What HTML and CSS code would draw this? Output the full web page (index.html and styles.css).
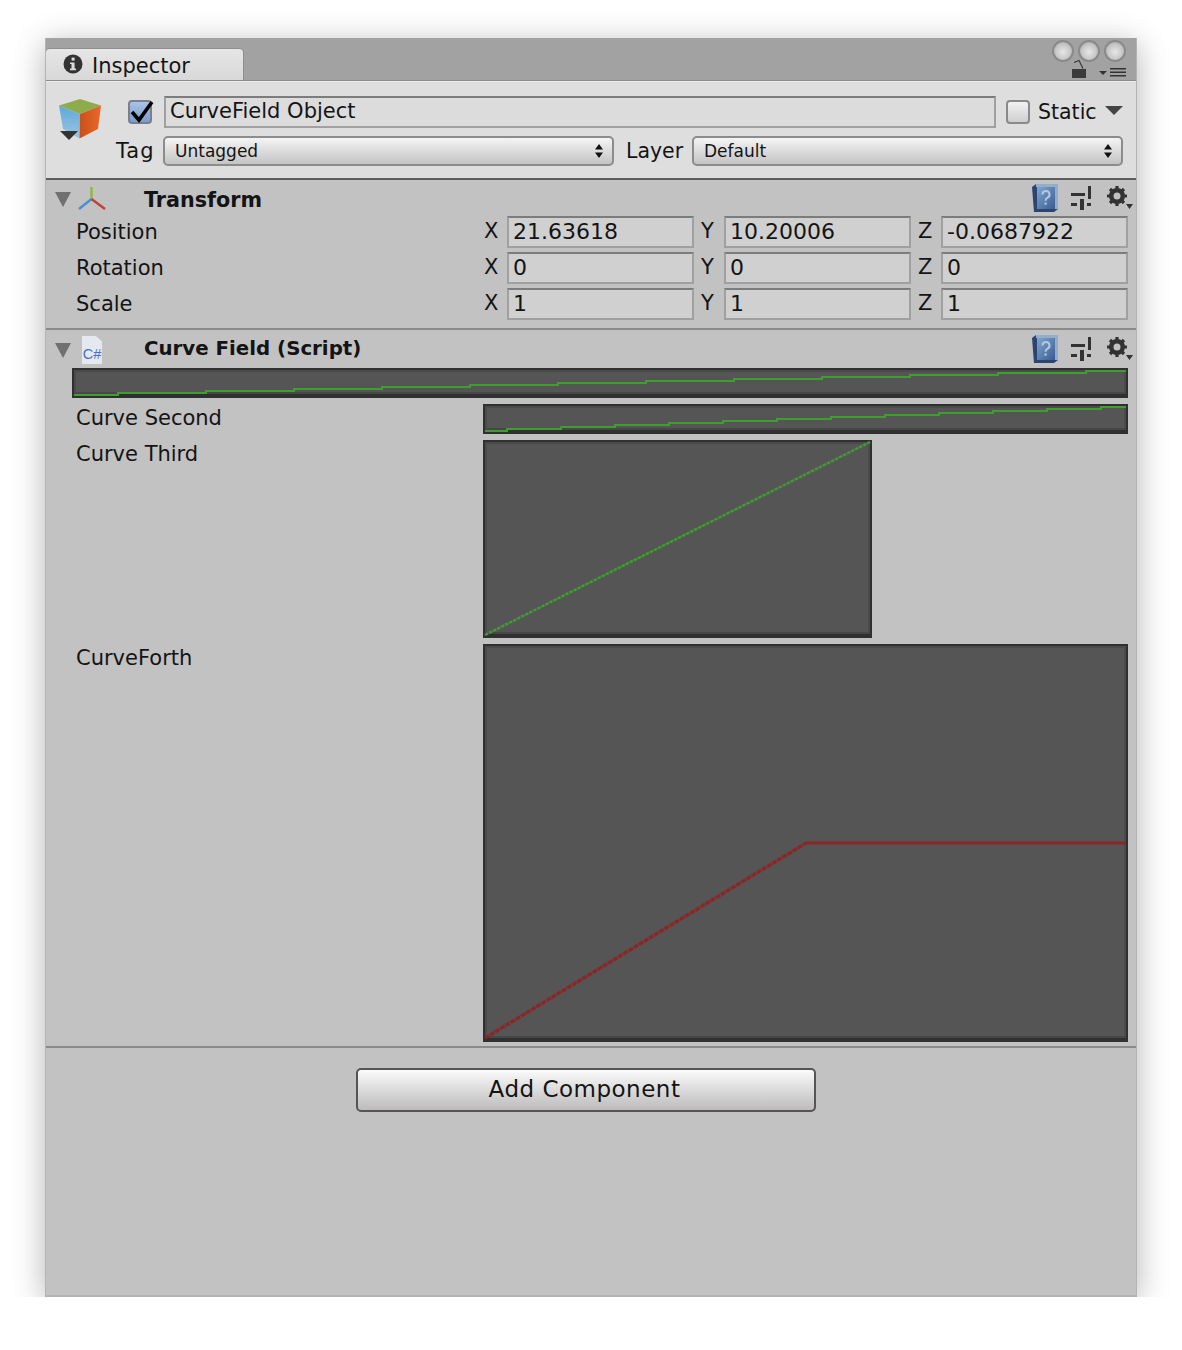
FILE: index.html
```html
<!DOCTYPE html>
<html lang="en">
<head>
    <meta charset="UTF-8">
    <title>Inspector</title>
    <link rel="stylesheet" href="styles.css">
</head>
<body>
<div class="window">
    <div class="tabbar">
        <div class="tab">
            <svg class="tab-icon" viewBox="0 0 20 20">
                <circle cx="10" cy="10" r="9.5" fill="#333"/>
                <rect x="8.6" y="3.6" width="3" height="3" fill="#ddd"/>
                <path d="M7 8.4h4.6v6.2h1.4v1.6H7v-1.6h1.5V10H7z" fill="#ddd"/>
            </svg>
            <span class="tab-title">Inspector</span>
        </div>
        <svg class="tab-tools" width="84" height="42" viewBox="0 0 84 42">
            <defs>
                <radialGradient id="bulb" cx="50%" cy="55%" r="60%">
                    <stop offset="0" stop-color="#e6e6e6"/>
                    <stop offset="0.6" stop-color="#c8c8c8"/>
                    <stop offset="1" stop-color="#a6a6a6"/>
                </radialGradient>
            </defs>
            <circle cx="13" cy="13" r="10" fill="url(#bulb)" stroke="#8a8a8a" stroke-width="2"/>
            <circle cx="39" cy="13" r="10" fill="url(#bulb)" stroke="#8a8a8a" stroke-width="2"/>
            <circle cx="65" cy="13" r="10" fill="url(#bulb)" stroke="#8a8a8a" stroke-width="2"/>
            <rect x="22" y="31" width="14" height="9" fill="#3a3a3a"/>
            <path d="M24 24.500l5-2 4 8" fill="none" stroke="#3a3a3a" stroke-width="1.200"/>
            <path d="M49 33h8l-4 4z" fill="#333"/>
            <path d="M60 30h16v1.600H60zM60 33.500h16v1.600H60zM60 37h16v1.600H60z" fill="#333"/>
        </svg>
    </div>

    <div class="object-head">
        <svg class="cube" width="48" height="46" viewBox="0 0 48 46">
            <defs>
                <linearGradient id="cubeLeft" x1="0" y1="0" x2="0" y2="1"><stop offset="0" stop-color="#5fa8da"/><stop offset="1" stop-color="#9cc6e0"/></linearGradient>
                <linearGradient id="cubeRight" x1="0" y1="0" x2="1" y2="0"><stop offset="0" stop-color="#c9501b"/><stop offset="1" stop-color="#e8692a"/></linearGradient>
            </defs>
            <path d="M24 2 45 8.500 24 17 3 8.500z" fill="#8fac4c"/>
            <path d="M3 8.500 24 17 23.500 41.500 7 32z" fill="url(#cubeLeft)"/>
            <path d="M24 17 45 8.500 42 32 23.500 41.500z" fill="url(#cubeRight)"/>
            <path d="M4 34h18l-9 9z" fill="#333"/>
        </svg>
        <div class="object-rows">
            <div class="name-row">
                <span class="check check-on">
                    <svg class="tick" width="20" height="20" viewBox="0 0 20 20"><path d="M2 10 9 18 22 0" fill="none" stroke="#000" stroke-width="3.600"/></svg>
                </span>
                <div class="field name-field">CurveField Object</div>
                <span class="check static-check"></span>
                <span class="static-label">Static</span>
                <span class="static-arrow"></span>
            </div>
            <div class="tag-row">
                <span class="tag-label">Tag</span>
                <div class="popup tag-popup">Untagged<svg class="updown" width="8" height="14" viewBox="0 0 8 14"><path d="M4 0 8 5.500H0zM4 14 0 8.500H8z" fill="#111"/></svg></div>
                <span class="layer-label">Layer</span>
                <div class="popup layer-popup">Default<svg class="updown" width="8" height="14" viewBox="0 0 8 14"><path d="M4 0 8 5.500H0zM4 14 0 8.500H8z" fill="#111"/></svg></div>
            </div>
        </div>
    </div>

    <section class="component transform">
        <div class="comp-head">
            <span class="foldout"></span>
            <svg class="comp-icon" width="28" height="24" viewBox="0 0 28 24">
                <path d="M13.500 13V1" stroke="#8fb83a" stroke-width="2.400" fill="none"/>
                <path d="M13.500 13 1 23" stroke="#4a8fd0" stroke-width="2.400" fill="none"/>
                <path d="M13.500 13 27 23" stroke="#c0403a" stroke-width="2.400" fill="none"/>
            </svg>
            <h2>Transform</h2>
            <div class="comp-tools">
                <svg class="help" width="26" height="28" viewBox="0 0 26 28">
                    <defs><linearGradient id="book" x1="0" y1="0" x2="1" y2="1"><stop offset="0" stop-color="#7fa6d0"/><stop offset="1" stop-color="#3a5c90"/></linearGradient></defs>
                    <path d="M0 3 4 0H26V25L22 28H2z" fill="#2c4570"/>
                    <path d="M4 0H26V25H23V3H4z" fill="#93aecb"/>
                    <rect x="5" y="3" width="18" height="22" fill="url(#book)"/>
                    <path d="M10.500 10.500a3.500 3.500 0 1 1 5 3.200c-1.500.8-2 1.300-2 3" fill="none" stroke="#b4c8e0" stroke-width="2"/>
                    <rect x="12.500" y="18.500" width="2.200" height="2.200" fill="#b4c8e0"/>
                </svg>
                <svg class="sliders" width="21" height="24" viewBox="0 0 21 24">
                    <path d="M0 7h14v3H0zM17 0h3v13h-3zM0 17h6v3H0zM9 13h4v11H9zM16 17h4v3h-4z" fill="#333"/>
                </svg>
                <svg class="gear" width="27" height="24" viewBox="0 0 27 24">
                    <circle cx="11" cy="10" r="6" fill="none" stroke="#333" stroke-width="4"/>
                    <path d="M11 0v20M1 10h20M4 3l14 14M18 3 4 17" stroke="#333" stroke-width="3.200"/>
                    <circle cx="11" cy="10" r="3.500" fill="#c2c2c2"/>
                    <path d="M20 18h7l-3.500 5z" fill="#333"/>
                </svg>
            </div>
        </div>
        <div class="vec-row">
            <span class="prop-label">Position</span>
            <div class="vec">
                <div class="axis"><span>X</span><div class="field">21.63618</div></div>
                <div class="axis"><span>Y</span><div class="field">10.20006</div></div>
                <div class="axis"><span>Z</span><div class="field">-0.0687922</div></div>
            </div>
        </div>
        <div class="vec-row">
            <span class="prop-label">Rotation</span>
            <div class="vec">
                <div class="axis"><span>X</span><div class="field">0</div></div>
                <div class="axis"><span>Y</span><div class="field">0</div></div>
                <div class="axis"><span>Z</span><div class="field">0</div></div>
            </div>
        </div>
        <div class="vec-row">
            <span class="prop-label">Scale</span>
            <div class="vec">
                <div class="axis"><span>X</span><div class="field">1</div></div>
                <div class="axis"><span>Y</span><div class="field">1</div></div>
                <div class="axis"><span>Z</span><div class="field">1</div></div>
            </div>
        </div>
    </section>

    <section class="component script">
        <div class="comp-head">
            <span class="foldout"></span>
            <div class="cs-icon">C#</div>
            <h2>Curve Field (Script)</h2>
            <div class="comp-tools">
                <svg class="help" width="26" height="28" viewBox="0 0 26 28">
                    <path d="M0 3 4 0H26V25L22 28H2z" fill="#2c4570"/>
                    <path d="M4 0H26V25H23V3H4z" fill="#93aecb"/>
                    <rect x="5" y="3" width="18" height="22" fill="url(#book)"/>
                    <path d="M10.500 10.500a3.500 3.500 0 1 1 5 3.200c-1.500.8-2 1.300-2 3" fill="none" stroke="#b4c8e0" stroke-width="2"/>
                    <rect x="12.500" y="18.500" width="2.200" height="2.200" fill="#b4c8e0"/>
                </svg>
                <svg class="sliders" width="21" height="24" viewBox="0 0 21 24">
                    <path d="M0 7h14v3H0zM17 0h3v13h-3zM0 17h6v3H0zM9 13h4v11H9zM16 17h4v3h-4z" fill="#333"/>
                </svg>
                <svg class="gear" width="27" height="24" viewBox="0 0 27 24">
                    <circle cx="11" cy="10" r="6" fill="none" stroke="#333" stroke-width="4"/>
                    <path d="M11 0v20M1 10h20M4 3l14 14M18 3 4 17" stroke="#333" stroke-width="3.200"/>
                    <circle cx="11" cy="10" r="3.500" fill="#c2c2c2"/>
                    <path d="M20 18h7l-3.500 5z" fill="#333"/>
                </svg>
            </div>
        </div>

        <svg class="curve curve-first" width="1056" height="30" viewBox="2 2 1052 24">
            <polyline class="line-green" points="2,27 46,27 46,25 134,25 134,23 222,23 222,21 310,21 310,19 398,19 398,17 486,17 486,15 574,15 574,13 662,13 662,11 750,11 750,9 838,9 838,7 926,7 926,5 1014,5 1014,3 1054,3"/>
        </svg>

        <div class="curve-row">
            <span class="prop-label">Curve Second</span>
            <svg class="curve" width="645" height="30" viewBox="2 2 641 24">
                <polyline class="line-green" points="2,27 24,27 24,25 78,25 78,23 132,23 132,21 186,21 186,19 240,19 240,17 294,17 294,15 348,15 348,13 402,13 402,11 456,11 456,9 510,9 510,7 564,7 564,5 618,5 618,3 643,3"/>
            </svg>
        </div>
        <div class="curve-row">
            <span class="prop-label">Curve Third</span>
            <svg class="curve" width="389" height="198" viewBox="2 2 385 192">
                <line class="line-dotted" x1="2" y1="195" x2="387" y2="2"/>
            </svg>
        </div>
        <div class="curve-row">
            <span class="prop-label">CurveForth</span>
            <svg class="curve" width="645" height="398" viewBox="2 2 641 392">
                <line class="line-red line-red-slope" x1="2" y1="394" x2="323" y2="199"/>
                <line class="line-red" x1="322" y1="199" x2="643" y2="199"/>
            </svg>
        </div>
    </section>

    <div class="add-wrap">
        <button class="add-btn">Add Component</button>
    </div>
</div>
</body>
</html>
```

FILE: styles.css
```css
body {
    margin: 0;
    padding: 38px 45px 0;
    background: #fff;
    font-family: "DejaVu Sans", "Liberation Sans", sans-serif;
    font-size: 21px;
    color: #141414;
}
.window {
    width: 1092px;
    height: 1259px;
    background: #c2c2c2;
    box-shadow: 0 6px 30px rgba(0, 0, 0, 0.3);
    box-sizing: border-box;
    border: 1px solid #b4b4b4;
    border-top: none;
    border-bottom: 2px solid #b4b4b4;
}

/* tab strip */
.tabbar {
    height: 43px;
    background: #a2a2a2;
    border-bottom: 1px solid #8a8a8a;
    box-sizing: border-box;
    display: flex;
    align-items: flex-end;
    justify-content: space-between;
}
.tab {
    width: 197px;
    height: 31px;
    background: linear-gradient(#e6e6e6, #d8d8d8);
    border-top-right-radius: 4px;
    border-top-left-radius: 4px;
    box-shadow: 1px 0 0 #8f8f8f, 0 -1px 0 #8f8f8f;
    display: flex;
    align-items: center;
    padding-left: 17px;
    box-sizing: border-box;
    gap: 9px;
}
.tab-icon {
    width: 20px;
    height: 20px;
    margin-top: -2px;
}
.tab-title {
    margin-top: 2px;
}
.tab-tools {
    margin-right: 2px;
    display: block;
}

/* object header */
.object-head {
    height: 99px;
    background: #dedede;
    border-top: 1px solid #ececec;
    border-bottom: 2px solid #5c5c5c;
    box-sizing: border-box;
    display: flex;
    padding: 14px 13px 0 10px;
}
.cube {
    margin-top: 1px;
    margin-right: 12px;
    flex-shrink: 0;
}
.object-rows {
    flex: 1;
    display: flex;
    flex-direction: column;
    gap: 8px;
}
.name-row {
    height: 32px;
    display: flex;
    align-items: center;
    padding-left: 12px;
}
.check {
    width: 24px;
    height: 24px;
    box-sizing: border-box;
    border: 2px solid #8a8a8a;
    border-radius: 4px;
    background: linear-gradient(#f2f2f2, #cfcfcf);
    flex-shrink: 0;
    display: flex;
    align-items: center;
    justify-content: center;
}
.check-on {
    background: linear-gradient(#a9c3e6, #7c9ccc);
    border-color: #77808c;
}
.tick {
    overflow: visible;
}
.field {
    height: 32px;
    box-sizing: border-box;
    border: 2px solid #a0a0a0;
    border-top-color: #7c7c7c;
    background: #d2d2d2;
    padding-left: 4px;
    line-height: 27px;
    white-space: nowrap;
    overflow: hidden;
}
.name-field {
    width: 832px;
    margin-left: 12px;
    background: #dcdcdc;
}
.static-check {
    margin-left: 10px;
}
.static-label {
    margin-left: 8px;
    font-size: 20.500px;
}
.static-arrow {
    margin-left: 8px;
    width: 0;
    height: 0;
    border-left: 9px solid transparent;
    border-right: 9px solid transparent;
    border-top: 9px solid #444;
    margin-top: -4px;
}
.tag-row {
    height: 30px;
    display: flex;
    align-items: center;
}
.tag-label {
    width: 47px;
    letter-spacing: 1px;
}
.popup {
    height: 30px;
    box-sizing: border-box;
    border: 2px solid #8c8c8c;
    border-radius: 5px;
    background: linear-gradient(#f4f4f4, #c4c4c4);
    font-size: 17px;
    line-height: 26px;
    padding: 0 9px 0 10px;
    display: flex;
    align-items: center;
    justify-content: space-between;
}
.tag-popup {
    width: 451px;
}
.layer-label {
    width: 79px;
    box-sizing: border-box;
    padding-left: 12px;
    font-size: 20.500px;
}
.layer-popup {
    width: 431px;
    margin-left: -1px;
}

/* components */
.component {
    border-bottom: 2px solid #8a8a8a;
    box-sizing: border-box;
}
.transform {
    height: 150px;
}
.script {
    height: 718px;
}
.comp-head {
    height: 38px;
    display: flex;
    align-items: center;
    padding-left: 9px;
}
.transform .comp-head {
    height: 36px;
}
.foldout {
    width: 0;
    height: 0;
    border-left: 8px solid transparent;
    border-right: 8px solid transparent;
    border-top: 15px solid #707070;
    margin-top: 2px;
}
.comp-icon {
    margin-left: 7px;
}
h2 {
    margin: 4px 0 0 38px;
    font-size: 20.700px;
    font-weight: bold;
    line-height: 1;
}
.script h2 {
    font-size: 19.800px;
    margin-top: 0;
}
.cs-icon {
    width: 20px;
    height: 28px;
    margin-left: 11px;
    margin-top: 2px;
    margin-right: 4px;
    background: #e4e8ef;
    font-family: "Liberation Sans", sans-serif;
    font-size: 14.500px;
    color: #4a6fc4;
    text-align: center;
    line-height: 36px;
    clip-path: polygon(0 0, 70% 0, 100% 20%, 100% 100%, 0 100%);
}
.comp-tools {
    margin-left: auto;
    margin-right: 3px;
    display: flex;
    align-items: center;
}
.sliders {
    margin-left: 13px;
}
.gear {
    margin-left: 14px;
}
.vec-row, .curve-row {
    display: flex;
    padding-left: 30px;
    margin-bottom: 4px;
}
.curve-row {
    margin-bottom: 6px;
    padding-right: 8px;
}
.prop-label {
    width: 407px;
    flex-shrink: 0;
    line-height: 32px;
    margin-top: -2px;
}
.vec-row .prop-label {
    width: 408px;
    margin-top: 0;
}
.vec {
    width: 644px;
    display: grid;
    grid-template-columns: repeat(3, 210px);
    column-gap: 7px;
    font-size: 22px;
}
.axis {
    display: flex;
    align-items: center;
}
.axis span {
    width: 23px;
    flex-shrink: 0;
    font-size: 21px;
    margin-top: -2px;
}
.axis .field {
    flex: 1;
    background: #d0d0d0;
}

/* curve swatches */
.curve {
    display: block;
    background: #555;
    border: solid #303030;
    border-width: 2px 2px 4px 2px;
    box-sizing: border-box;
    box-shadow: inset 0 2px 0 #4b4b4b, inset 0 -2px 0 #474747, inset 2px 0 0 #4b4b4b, inset -2px 0 0 #4b4b4b;
    overflow: visible;
}
.curve-first {
    margin: 0 0 6px 26px;
}
.line-green {
    fill: none;
    stroke: #3f9f2e;
    stroke-width: 2;
}
.line-dotted {
    stroke: #3f9f2e;
    stroke-width: 2.400;
    stroke-dasharray: 3.500 1;
}
.line-red {
    stroke: #8c2626;
    stroke-width: 3;
}
.line-red-slope {
    stroke-width: 3.400;
    stroke-dasharray: 5 1;
}

/* footer button */
.add-wrap {
    display: flex;
    padding: 20px 0 0 310px;
}
.add-btn {
    width: 460px;
    height: 44px;
    box-sizing: border-box;
    border: 2px solid #555;
    border-radius: 5px;
    background: linear-gradient(#fbfbfb, #bdbbbb);
    font-family: inherit;
    font-size: 23px;
    letter-spacing: 0.500px;
    color: #141414;
    padding: 0 3px 3px 0;
}
```
